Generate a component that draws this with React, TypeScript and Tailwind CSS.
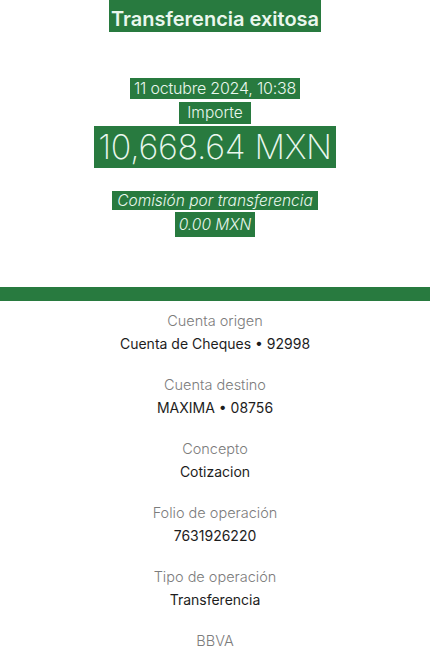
import React from 'react';

const details = [
  { label: 'Cuenta origen', value: 'Cuenta de Cheques • 92998' },
  { label: 'Cuenta destino', value: 'MAXIMA • 08756' },
  { label: 'Concepto', value: 'Cotizacion' },
  { label: 'Folio de operación', value: '7631926220' },
  { label: 'Tipo de operación', value: 'Transferencia' },
];

export default function App() {
  return (
    <div className="w-full min-h-[661px] bg-white overflow-hidden" style={{ fontFamily: 'Inter, "Open Sans", sans-serif' }}>
      {/* header: green blocks behind the text */}
      <div className="flex flex-col items-center">
        <span className="bg-[#287a3f] text-[#eaf7ee] text-[20px] font-semibold leading-7 pt-[5px] h-8 px-[2px]">
          Transferencia exitosa
        </span>
        <span className="mt-[46px] bg-[#287a3f] text-[#eaf7ee] text-[16px] font-light leading-[21px] px-[4px] tracking-[-0.2px]">
          11 octubre 2024, 10:38
        </span>
        <span className="mt-[3px] bg-[#287a3f] text-[#eaf7ee] text-[15.5px] font-light leading-[22px] px-[8px]">
          Importe
        </span>
        <span className="mt-[2px] bg-[#287a3f] text-[#eaf7ee] text-[34px] font-extralight leading-[42px] px-[4px] tracking-[-0.3px]">
          10,668.64 MXN
        </span>
        <span className="mt-[23px] bg-[#287a3f] text-[#eaf7ee] text-[15.5px] font-light italic leading-[19px] px-[5px]">
          Comisión por transferencia
        </span>
        <span className="mt-[2px] bg-[#287a3f] text-[#eaf7ee] text-[15.5px] font-light italic leading-[25px] px-[4px]">
          0.00 MXN
        </span>
      </div>

      <div className="mt-[50px] h-[14px] bg-[#287a3f]" />

      <div className="flex flex-col items-center pt-[10px] gap-[21px]">
        {details.map((d) => (
          <div key={d.label} className="flex flex-col items-center">
            <span className="text-[14.5px] leading-5 font-light text-[#7c7c7c]">{d.label}</span>
            <span className="mt-[3px] text-[14px] leading-5 font-normal text-[#1d1d1d]">{d.value}</span>
          </div>
        ))}
        <span className="text-[14.5px] leading-5 font-light text-[#7c7c7c]">BBVA</span>
      </div>
    </div>
  );
}
